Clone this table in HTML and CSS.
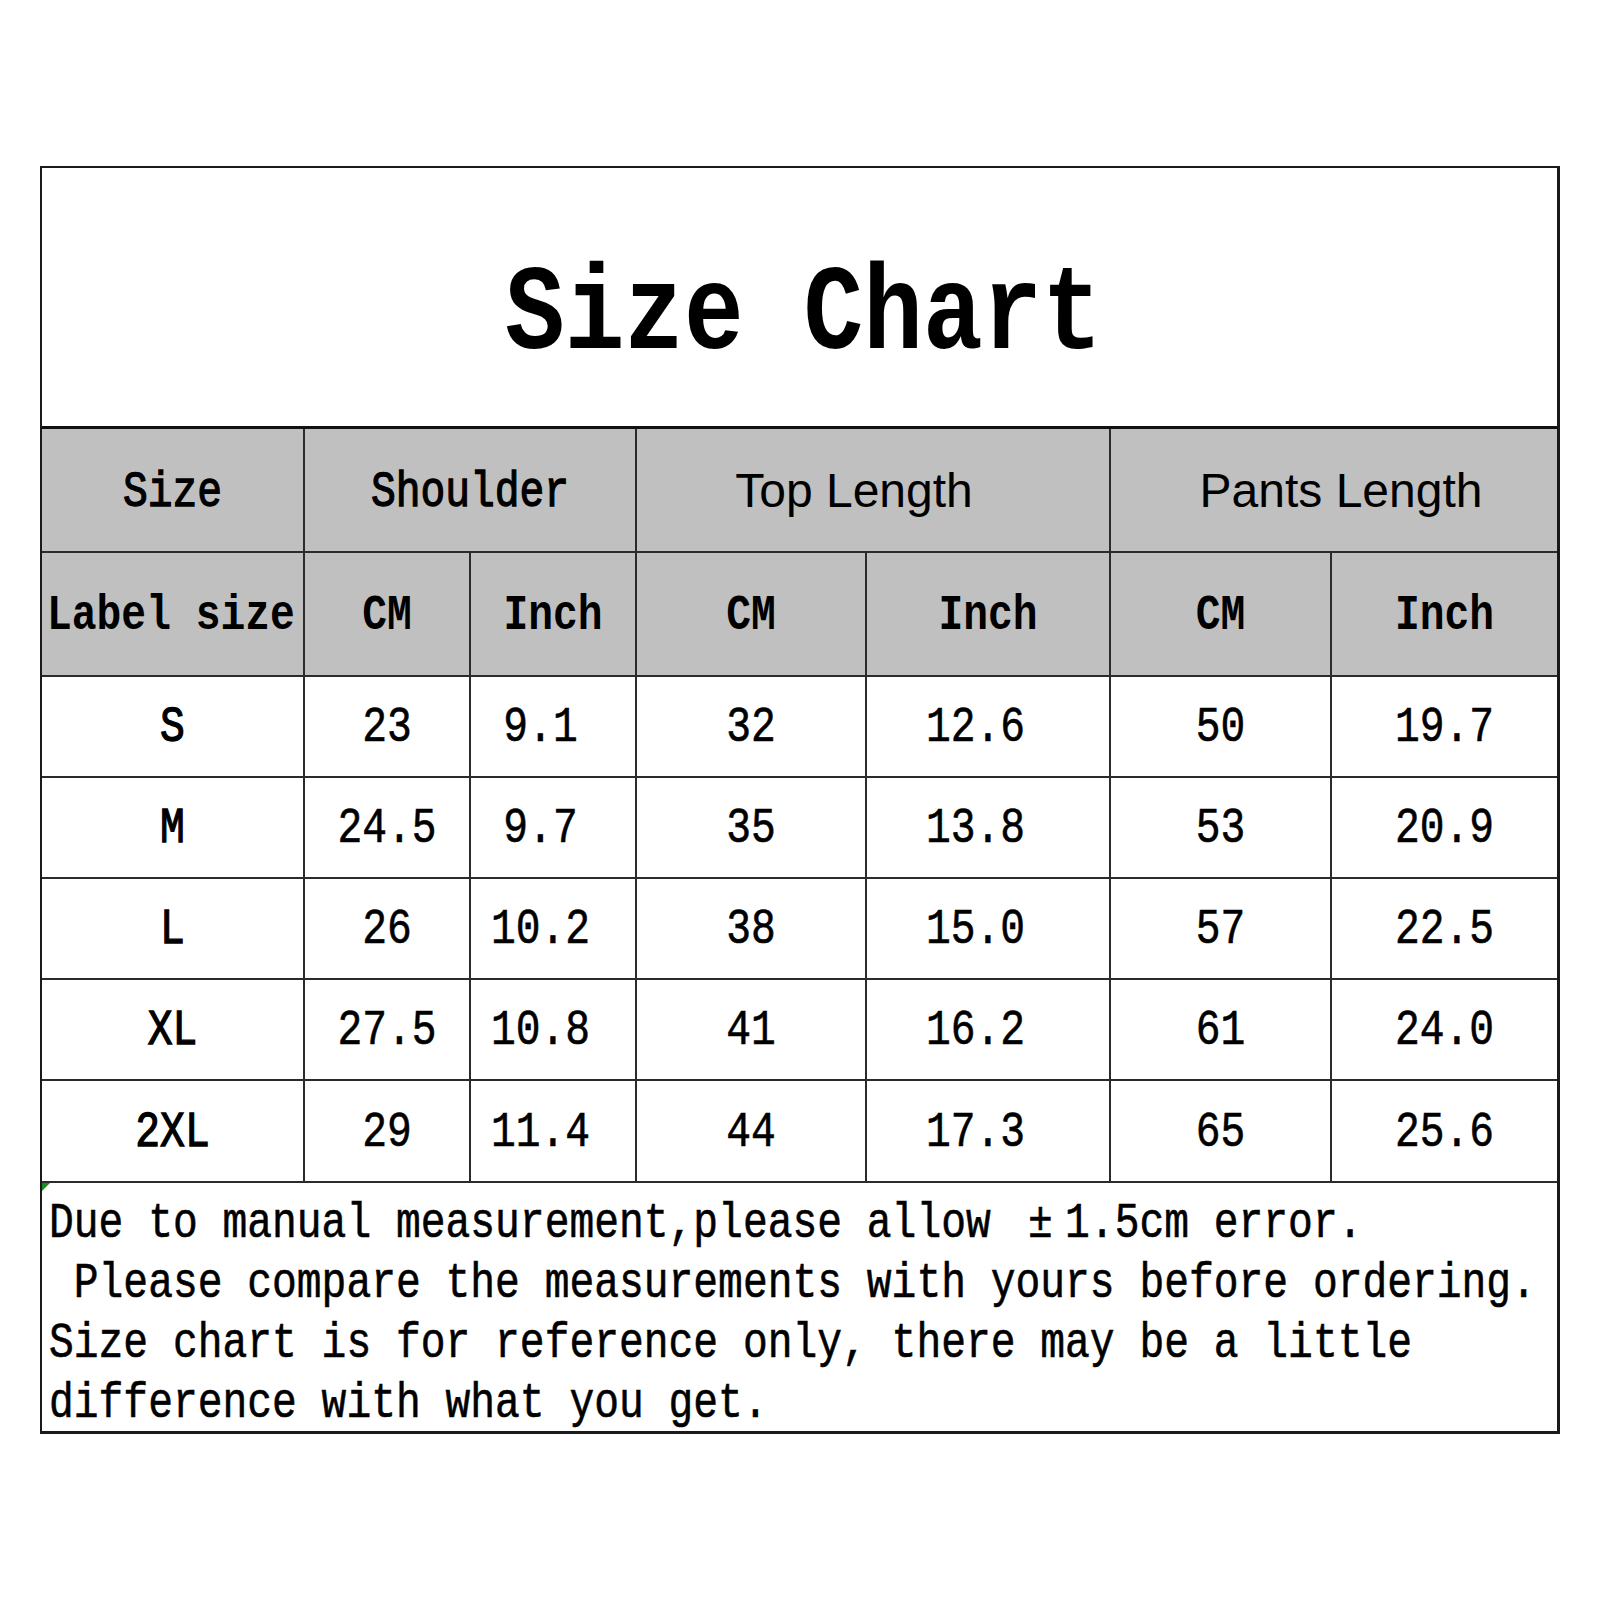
FILE: index.html
```html
<!DOCTYPE html>
<html lang="en">
<head>
<meta charset="utf-8">
<title>Size Chart</title>
<link rel="stylesheet" href="styles.css">
</head>
<body>
<div class="chart">
  <div class="title"><h1><span class="v">Size Chart</span></h1></div>
  <table class="grid">
    <colgroup>
      <col class="c1"><col class="c2"><col class="c3"><col class="c4"><col class="c5"><col class="c6"><col class="c7">
    </colgroup>
    <tr class="head1">
      <td><span class="v">Size</span></td>
      <td colspan="2"><span class="v">Shoulder</span></td>
      <td colspan="2" class="sans top">Top Length</td>
      <td colspan="2" class="sans pants">Pants Length</td>
    </tr>
    <tr class="head2">
      <td class="label"><span class="v">Label size</span></td>
      <td><span class="v">CM</span></td><td><span class="v">Inch</span></td>
      <td><span class="v">CM</span></td><td><span class="v">Inch</span></td>
      <td><span class="v">CM</span></td><td><span class="v">Inch</span></td>
    </tr>
    <tr class="row"><td class="sz"><span class="v">S</span></td><td><span class="v">23</span></td><td class="shift"><span class="v">9.1</span></td><td><span class="v">32</span></td><td class="shift"><span class="v">12.6</span></td><td><span class="v">50</span></td><td><span class="v">19.7</span></td></tr>
    <tr class="row"><td class="sz"><span class="v">M</span></td><td><span class="v">24.5</span></td><td class="shift"><span class="v">9.7</span></td><td><span class="v">35</span></td><td class="shift"><span class="v">13.8</span></td><td><span class="v">53</span></td><td><span class="v">20.9</span></td></tr>
    <tr class="row"><td class="sz"><span class="v">L</span></td><td><span class="v">26</span></td><td class="shift"><span class="v">10.2</span></td><td><span class="v">38</span></td><td class="shift"><span class="v">15.0</span></td><td><span class="v">57</span></td><td><span class="v">22.5</span></td></tr>
    <tr class="row"><td class="sz"><span class="v">XL</span></td><td><span class="v">27.5</span></td><td class="shift"><span class="v">10.8</span></td><td><span class="v">41</span></td><td class="shift"><span class="v">16.2</span></td><td><span class="v">61</span></td><td><span class="v">24.0</span></td></tr>
    <tr class="row"><td class="sz"><span class="v">2XL</span></td><td><span class="v">29</span></td><td class="shift"><span class="v">11.4</span></td><td><span class="v">44</span></td><td class="shift"><span class="v">17.3</span></td><td><span class="v">65</span></td><td><span class="v">25.6</span></td></tr>
  </table>
  <div class="note">
    <span class="flag"></span>
    <p>Due to manual measurement,please allow <span class="fw">±</span>1.5cm error.</p>
    <p>&nbsp;Please compare the measurements with yours before ordering.</p>
    <p>Size chart is for reference only, there may be a little</p>
    <p>difference with what you get.</p>
  </div>
</div>
</body>
</html>
```

FILE: styles.css
```css
html, body {
  margin: 0;
  padding: 0;
  background: #fff;
}

body {
  font-family: "Liberation Mono", "DejaVu Sans Mono", monospace;
  color: #000;
}

.chart {
  margin: 166px 0 0 40px;
  width: 1520px;
  box-sizing: border-box;
  border: 2px solid #1a1a1a;
  border-right-width: 3px;
  border-bottom-width: 3px;
}

.title {
  height: 261px;
  border-bottom: 3px solid #111;
  display: flex;
  align-items: center;
  justify-content: center;
  padding-top: 38px;
  padding-left: 8px;
  box-sizing: border-box;
}

.title h1 {
  margin: 0;
  font-size: 99.5px;
  font-weight: bold;
  line-height: 1;
}

.v {
  display: inline-block;
  transform: scaleY(1.22);
}

.grid {
  width: 100%;
  border-collapse: collapse;
  table-layout: fixed;
}

.c1 { width: 262px; }
.c2 { width: 166px; }
.c3 { width: 166px; }
.c4 { width: 230px; }
.c5 { width: 244px; }
.c6 { width: 221px; }
.c7 { width: 226px; }

.grid td {
  border: 2px solid #2b2b2b;
  text-align: center;
  vertical-align: middle;
  padding: 0;
  font-size: 41.3px;
  line-height: 1;
  white-space: nowrap;
  -webkit-text-stroke: 0.5px #000;
}

.grid tr:first-child td { border-top: none; }
.grid tr:last-child td { border-bottom: none; }
.grid td:first-child { border-left: none; }
.grid td:last-child { border-right: none; }

.head1 td, .head2 td {
  background: #c0c0c0;
  font-weight: bold;
  -webkit-text-stroke: 0;
}

.head1 td {
  font-weight: normal;
  -webkit-text-stroke: 1.1px #000;
}

.head1 { height: 123px; }
.head2 { height: 124px; }
.row { height: 101px; }

.head1 td { padding-top: 8px; }
.head2 td { padding-top: 6px; }
.row td { padding-top: 5px; }

.grid .shift { padding-right: 25px; }

.row .sz {
  font-weight: normal;
  -webkit-text-stroke: 1.1px #000;
}

.grid .sans {
  font-family: "Liberation Sans", Arial, sans-serif;
  font-size: 48px;
  font-weight: normal;
  padding-top: 2px;
  -webkit-text-stroke: 0;
}

.grid .top { padding-right: 38px; }
.grid .pants { padding-left: 14px; }

.grid .label { text-align: left; padding-left: 5px; }

.note {
  position: relative;
  height: 250px;
  border-top: 2px solid #2b2b2b;
  padding: 13px 0 0 7px;
  box-sizing: border-box;
  font-size: 41.3px;
  -webkit-text-stroke: 0.5px #000;
}

.note p {
  margin: 0;
  line-height: 60px;
  white-space: nowrap;
  transform: scaleY(1.22);
  transform-origin: 0 41px;
}

.fw {
  display: inline-block;
  width: 2ch;
  text-align: center;
}

.flag {
  position: absolute;
  left: 0;
  top: 0;
  width: 0;
  height: 0;
  border-top: 8px solid #1f8a1f;
  border-right: 8px solid transparent;
}
```
